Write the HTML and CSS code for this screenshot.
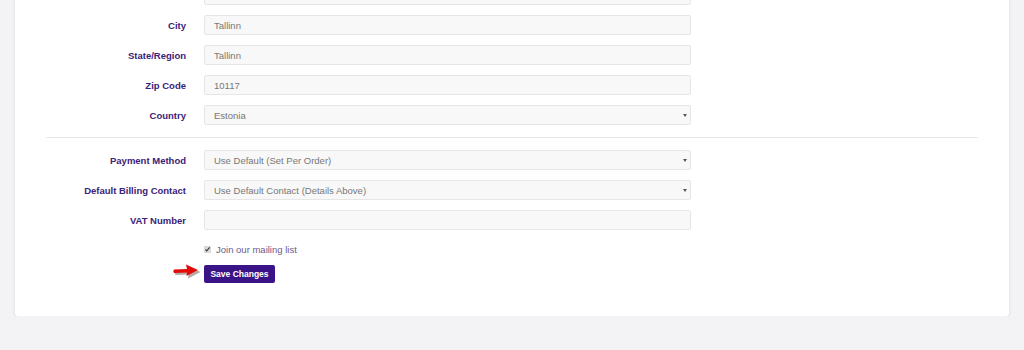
FILE: index.html
```html
<!DOCTYPE html>
<html>
<head>
    <meta charset="UTF-8">
    <title>Account Details</title>
    <link rel="stylesheet" href="styles.css">
</head>
<body>
    <div class="card">
        <div class="form-row">
            <label></label>
            <input class="field" type="text" value="">
        </div>
        <div class="form-row">
            <label>City</label>
            <input class="field" type="text" value="Tallinn">
        </div>
        <div class="form-row">
            <label>State/Region</label>
            <input class="field" type="text" value="Tallinn">
        </div>
        <div class="form-row">
            <label>Zip Code</label>
            <input class="field" type="text" value="10117">
        </div>
        <div class="form-row">
            <label>Country</label>
            <span class="select-wrap">
                <select class="field">
                    <option>Estonia</option>
                </select>
            </span>
        </div>

        <hr class="divider">

        <div class="form-row">
            <label>Payment Method</label>
            <span class="select-wrap">
                <select class="field">
                    <option>Use Default (Set Per Order)</option>
                </select>
            </span>
        </div>
        <div class="form-row">
            <label>Default Billing Contact</label>
            <span class="select-wrap">
                <select class="field">
                    <option>Use Default Contact (Details Above)</option>
                </select>
            </span>
        </div>
        <div class="form-row">
            <label>VAT Number</label>
            <input class="field" type="text" value="">
        </div>

        <div class="check-row">
            <label class="check-label"><input type="checkbox" checked> Join our mailing list</label>
        </div>
        <div class="submit-row">
            <!-- annotation arrow pointing at the button -->
            <svg class="arrow" width="30" height="16" viewBox="0 0 30 16">
                <path d="M2 7 L15 6.5 L14 1.5 L27 7.5 L14.5 14 L15 10 L2 10.5 Q0.5 8.7 2 7 Z" fill="#3a0000" opacity="0.35" transform="translate(1.5,1.5)"/>
                <path d="M2 6.5 L15 6 L14 1.5 L26 7 L14.5 13 L15 9.5 L2 10 Q0.5 8.3 2 6.5 Z" fill="#e30a0a"/>
            </svg>
            <button class="save-button">Save Changes</button>
        </div>
    </div>
</body>
</html>
```

FILE: styles.css
```css
body {
    background-color: #f3f3f5;
    font-family: "Liberation Sans", Arial, sans-serif;
    margin: 0;
    padding: 0;
}
.card {
    background-color: #fff;
    margin: -40px 15px 0;
    padding: 25px 31px 33px;
    border-radius: 3px;
    box-shadow: 0 1px 3px rgba(0,0,0,0.12);
}
.form-row {
    display: flex;
    align-items: center;
    gap: 18px;
    margin-bottom: 10px;
}
.form-row label {
    width: 140px;
    text-align: right;
    color: #3b2279;
    font-size: 9.5px;
    font-weight: bold;
}
.field {
    display: block;
    width: 487px;
    height: 20px;
    box-sizing: border-box;
    margin: 0;
    padding: 0 9px;
    border: 1px solid #e6e6e6;
    border-radius: 2px;
    background-color: #f8f8f8;
    color: #777;
    font-family: inherit;
    font-size: 9.5px;
    outline: none;
}
.select-wrap {
    position: relative;
    display: block;
}
.select-wrap select {
    -webkit-appearance: none;
    appearance: none;
}
.select-wrap::after {
    content: "";
    position: absolute;
    right: 4px;
    top: 9px;
    border-left: 2.5px solid transparent;
    border-right: 2.5px solid transparent;
    border-top: 3px solid #555;
}
.divider {
    border: 0;
    border-top: 1px solid #e8e8e8;
    margin: 12px 0 12px;
}
.check-row {
    padding-left: 158px;
    margin-top: 13px;
    height: 12px;
    display: flex;
    align-items: center;
}
.check-label {
    display: flex;
    align-items: center;
    color: #6b5c8c;
    font-size: 9.5px;
}
.check-label input {
    width: 7px;
    height: 7px;
    margin: 0 5px 0 0;
    accent-color: #dcdcdc;
}
.submit-row {
    position: relative;
    padding-left: 158px;
    margin-top: 10px;
}
.arrow {
    position: absolute;
    left: 126px;
    top: -2px;
}
.save-button {
    display: block;
    height: 18px;
    width: 71px;
    padding: 0;
    border: 0;
    border-radius: 2px;
    background-color: #3a1387;
    color: #fff;
    font-family: inherit;
    font-size: 8.5px;
    font-weight: bold;
}
```
